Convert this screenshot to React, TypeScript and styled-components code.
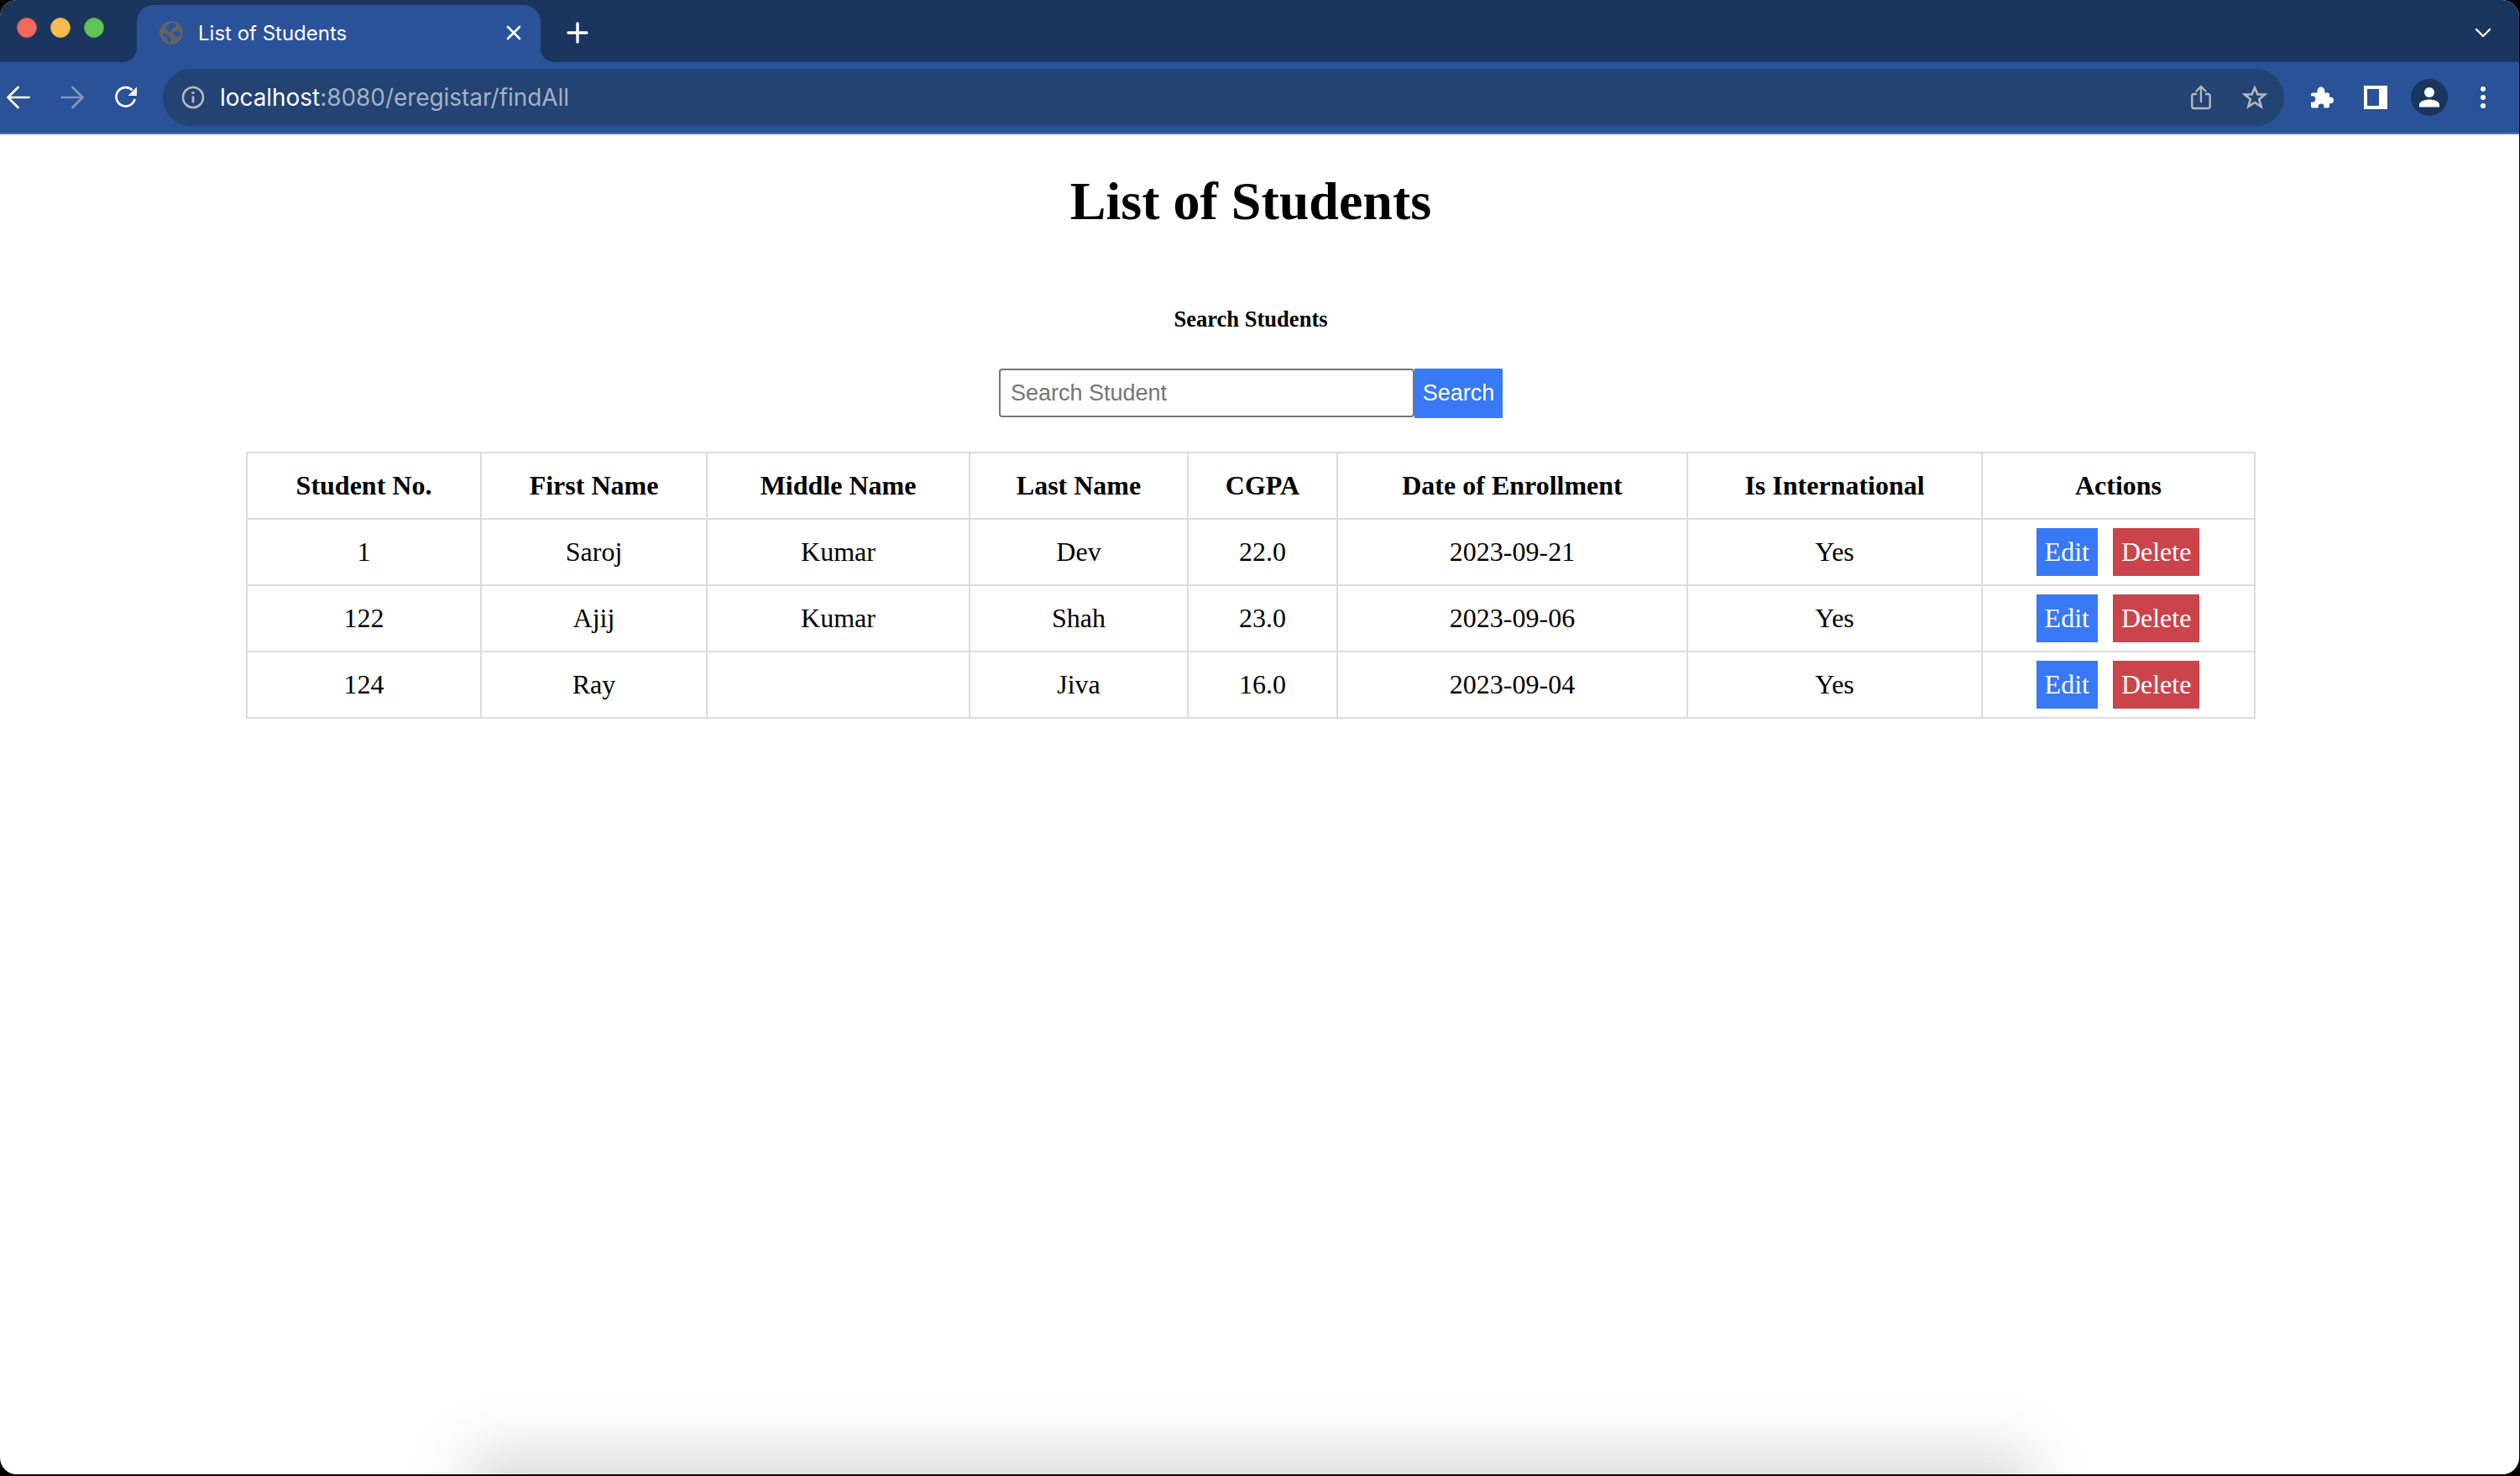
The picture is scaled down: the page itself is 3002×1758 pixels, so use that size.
import React from "react";
import styled, { createGlobalStyle } from "styled-components";

const DARK = "#1a365f";
const CHROME = "#2a5298";
const OMNIBOX = "#234373";
const BLUE = "#3779f6";
const RED = "#cb444c";
const LINE = "#dcdcdc";

const GlobalStyle = createGlobalStyle`
  html, body {
    margin: 0;
    height: 100%;
    background: #000;
    overflow: hidden;
  }
`;

const Window = styled.div`
  position: relative;
  width: calc(100vw - 1px);
  height: calc(100vh - 2px);
  background: #fff;
  border-radius: 20px;
  overflow: hidden;
  display: flex;
  flex-direction: column;
`;

const TabStrip = styled.div`
  height: 74px;
  flex: none;
  background: ${DARK};
  display: flex;
  align-items: flex-end;
  padding-right: 21px;
`;

const Lights = styled.div`
  width: 163px;
  height: 74px;
  flex: none;
  padding: 21px 0 0 20px;
  box-sizing: border-box;
  display: flex;
  gap: 16px;
  align-items: flex-start;
`;

const Light = styled.span<{ $color: string; $edge: string }>`
  width: 24px;
  height: 24px;
  box-sizing: border-box;
  border-radius: 50%;
  background: ${(p) => p.$color};
  border: 1px solid ${(p) => p.$edge};
`;

const Tab = styled.div`
  position: relative;
  width: 481px;
  height: 68px;
  flex: none;
  box-sizing: border-box;
  padding: 0 23px 2px 27px;
  background: ${CHROME};
  border-radius: 20px 20px 0 0;
  display: flex;
  align-items: center;

  &::before,
  &::after {
    content: "";
    position: absolute;
    bottom: 0;
    width: 16px;
    height: 16px;
  }
  &::before {
    left: -16px;
    background: radial-gradient(circle at 0 0, ${DARK} 15.5px, ${CHROME} 16px);
  }
  &::after {
    right: -16px;
    background: radial-gradient(circle at 100% 0, ${DARK} 15.5px, ${CHROME} 16px);
  }
`;

const TabTitle = styled.span`
  flex: 1;
  margin-left: 18px;
  font: 400 24px "Inter", "Liberation Sans", sans-serif;
  color: #fff;
`;

const NewTab = styled.div`
  margin-left: 24px;
  width: 40px;
  height: 68px;
  padding-bottom: 2px;
  box-sizing: border-box;
  display: flex;
  align-items: center;
  justify-content: center;
`;

const StripEnd = styled.div`
  margin-left: auto;
  height: 68px;
  padding-bottom: 2px;
  box-sizing: border-box;
  display: flex;
  align-items: center;
`;

const Toolbar = styled.div`
  height: 84px;
  flex: none;
  background: ${CHROME};
  display: flex;
  align-items: center;
  gap: 20px;
  padding-right: 21px;
  border-bottom: 2px solid #4e72a8;
`;

const IconButton = styled.div`
  width: 44px;
  height: 44px;
  flex: none;
  display: flex;
  align-items: center;
  justify-content: center;
`;

const Omnibox = styled.div`
  flex: 1;
  height: 68px;
  margin: 0 3px 0 2px;
  background: ${OMNIBOX};
  border-radius: 34px;
  display: flex;
  align-items: center;
  padding: 0 13px 0 22px;
`;

const Url = styled.span`
  flex: 1;
  margin-left: 18px;
  font: 400 27.9px "Inter", "Liberation Sans", sans-serif;
  color: #a4b1c6;
`;

const Host = styled.span`
  color: #fff;
`;

const OmniAction = styled.div`
  width: 44px;
  height: 44px;
  margin-left: 20px;
  display: flex;
  align-items: center;
  justify-content: center;
`;

const Page = styled.main`
  flex: 1;
  padding: 0 21px 0 0;
  display: flex;
  flex-direction: column;
  align-items: center;
  font-family: "Liberation Serif", "Times New Roman", serif;
  color: #000;
`;

const Title = styled.h1`
  margin: 42px 0 0;
  font-size: 64px;
  line-height: 76px;
  font-weight: 700;
`;

const SearchHeading = styled.h5`
  margin: 86px 0 0;
  font-size: 26.56px;
  line-height: 33px;
  font-weight: 700;
`;

const SearchForm = styled.form`
  margin: 42px 0 0;
  display: flex;
  align-items: flex-start;
`;

const SearchInput = styled.input`
  width: 495px;
  height: 58px;
  box-sizing: border-box;
  padding: 0 12px;
  border: 2px solid #767676;
  border-radius: 4px;
  outline: none;
  font: 400 27px "Liberation Sans", Arial, sans-serif;

  &::placeholder {
    color: #757575;
    opacity: 1;
  }
`;

const SearchButton = styled.button`
  width: 105px;
  height: 59px;
  padding: 0;
  border: 0;
  background: ${BLUE};
  color: #fff;
  font: 400 27px "Liberation Sans", Arial, sans-serif;
`;

const Table = styled.table`
  margin-top: 40px;
  width: 2392px;
  table-layout: fixed;
  border-collapse: collapse;
  font-size: 32px;
`;

const Col = styled.col<{ $w: number }>`
  width: ${(p) => p.$w}px;
`;

const HeadCell = styled.th`
  height: 77px;
  padding: 0;
  border: 2px solid ${LINE};
  font-weight: 700;
  text-align: center;
`;

const Cell = styled.td`
  height: 77px;
  padding: 0;
  border: 2px solid ${LINE};
  text-align: center;
`;

const Actions = styled.div`
  display: flex;
  justify-content: center;
  gap: 18px;
  padding-right: 1px;
`;

const RowButton = styled.button<{ $bg: string }>`
  height: 57px;
  padding: 0 10px;
  border: 0;
  background: ${(p) => p.$bg};
  color: #fff;
  font-family: "Liberation Serif", "Times New Roman", serif;
  font-size: 32px;
`;

const DockShadow = styled.div`
  position: absolute;
  left: 560px;
  width: 1860px;
  top: 1730px;
  height: 200px;
  background: rgba(0, 0, 0, 0.15);
  filter: blur(34px);
  pointer-events: none;
`;

const Globe = () => (
  <svg width="28" height="28" viewBox="0 0 28 28">
    <circle cx="14" cy="14" r="14" fill="#5f6368" />
    <path
      d="M12 3c3-1 6-1 8 1l-1 3-4 2-1 3-3 1-1-3-3-2zM17 13l6-1 2 3-2 4-4-1-1-2-3-1zM4 15l5 1 3 3 2 1-1 5-3-1-1-4-4-2z"
      fill="#2a5298"
    />
  </svg>
);

const CloseIcon = () => (
  <svg width="18" height="18" viewBox="0 0 18 18" fill="none" stroke="#fff" strokeWidth="2.6" strokeLinecap="round">
    <path d="M2 2l14 14M16 2L2 16" />
  </svg>
);

const PlusIcon = () => (
  <svg width="26" height="26" viewBox="0 0 26 26" fill="none" stroke="#fff" strokeWidth="3.4" strokeLinecap="round">
    <path d="M13 2v22M2 13h22" />
  </svg>
);

const ChevronIcon = () => (
  <svg width="20" height="12" viewBox="0 0 20 12" fill="none" stroke="#fff" strokeWidth="2.4" strokeLinecap="round" strokeLinejoin="round">
    <path d="M2 2l8 8 8-8" />
  </svg>
);

const ArrowIcon = ({ color, flip }: { color: string; flip?: boolean }) => (
  <svg width="28" height="28" viewBox="0 0 28 28" fill="none" stroke={color} strokeWidth="2.6" strokeLinecap="round" strokeLinejoin="round">
    <path d={flip ? "M1.5 14h25M14.5 2l12 12-12 12" : "M26.5 14h-25M13.5 2l-12 12 12 12"} />
  </svg>
);

const ReloadIcon = () => (
  <svg width="28" height="28" viewBox="0 0 28 28">
    <path d="M24.6 16a11.2 11.2 0 1 1-3-10.6" fill="none" stroke="#fff" strokeWidth="2.7" />
    <path d="M27 1.5V12H16.5z" fill="#fff" />
  </svg>
);

const InfoIcon = () => (
  <svg width="28" height="28" viewBox="0 0 28 28" fill="none">
    <circle cx="14" cy="14" r="12" stroke="#b4b9c0" strokeWidth="2.6" />
    <circle cx="14" cy="8.6" r="1.7" fill="#b4b9c0" />
    <path d="M14 12.5v8" stroke="#b4b9c0" strokeWidth="2.8" />
  </svg>
);

const ShareIcon = () => (
  <svg width="24" height="30" viewBox="0 0 24 30" fill="none" stroke="#b4b9c0" strokeWidth="2.4" strokeLinejoin="round">
    <path d="M7 11H3.500A2.200 2.200 0 0 0 1.300 13.200v12.600A2.200 2.200 0 0 0 3.500 28h17a2.200 2.200 0 0 0 2.200-2.200V13.200A2.200 2.200 0 0 0 20.500 11H17" />
    <path d="M12 20V2M6.500 7.500L12 2l5.500 5.500" strokeLinecap="round" />
  </svg>
);

const StarIcon = () => (
  <svg width="30" height="30" viewBox="0 0 30 30" fill="none" stroke="#b4b9c0" strokeWidth="2.6" strokeLinejoin="miter">
    <path d="M15 3.500l3.500 8h8.500l-6.800 5.700 2.400 8.800L15 21l-7.600 5 2.400-8.800L3 11.500h8.500z" />
  </svg>
);

const PuzzleIcon = () => (
  <svg width="30" height="30" viewBox="0 0 30 30" fill="#fff">
    <path d="M2 11.500a2 2 0 0 1 2-2h5.500V7a4.400 4.400 0 0 1 8.800 0v2.500h3.700a2 2 0 0 1 2 2v3.200h1.200a3.800 3.800 0 0 1 0 7.600H24v3.200a2 2 0 0 1-2 2h-4.500v-1.700a3.400 3.400 0 0 0-6.800 0v1.700H4a2 2 0 0 1-2-2v-4.700h1.500a3.800 3.800 0 0 0 0-7.600H2z" />
  </svg>
);

const SidePanelIcon = () => (
  <svg width="28" height="28" viewBox="0 0 28 28">
    <path d="M0 0h28v28H0zM4 4v20h14V4z" fill="#fff" fillRule="evenodd" />
  </svg>
);

const AvatarIcon = () => (
  <svg width="44" height="44" viewBox="0 0 44 44">
    <circle cx="22" cy="22" r="22" fill={DARK} />
    <circle cx="22" cy="16" r="6" fill="#fff" />
    <path d="M10 33.500v-3c0-4 8-6 12-6s12 2 12 6v3z" fill="#fff" />
  </svg>
);

const KebabIcon = () => (
  <svg width="8" height="28" viewBox="0 0 8 28" fill="#fff">
    <circle cx="4" cy="4" r="3" />
    <circle cx="4" cy="14" r="3" />
    <circle cx="4" cy="24" r="3" />
  </svg>
);

const columns = [
  { name: "Student No.", width: 279 },
  { name: "First Name", width: 269 },
  { name: "Middle Name", width: 313 },
  { name: "Last Name", width: 260 },
  { name: "CGPA", width: 178 },
  { name: "Date of Enrollment", width: 417 },
  { name: "Is International", width: 351 },
  { name: "Actions", width: 325 },
];

const students = [
  ["1", "Saroj", "Kumar", "Dev", "22.0", "2023-09-21", "Yes"],
  ["122", "Ajij", "Kumar", "Shah", "23.0", "2023-09-06", "Yes"],
  ["124", "Ray", "", "Jiva", "16.0", "2023-09-04", "Yes"],
];

const App = () => {
  return (
    <>
      <GlobalStyle />
      <Window>
        <TabStrip>
          <Lights>
            <Light $color="#ee6a5f" $edge="#d2574d" />
            <Light $color="#f5bd4f" $edge="#d9a441" />
            <Light $color="#61c454" $edge="#52a846" />
          </Lights>
          <Tab>
            <Globe />
            <TabTitle>List of Students</TabTitle>
            <CloseIcon />
          </Tab>
          <NewTab>
            <PlusIcon />
          </NewTab>
          <StripEnd>
            <IconButton>
              <ChevronIcon />
            </IconButton>
          </StripEnd>
        </TabStrip>
        <Toolbar>
          <IconButton>
            <ArrowIcon color="#fff" />
          </IconButton>
          <IconButton>
            <ArrowIcon color="#7f97c1" flip />
          </IconButton>
          <IconButton>
            <ReloadIcon />
          </IconButton>
          <Omnibox>
            <InfoIcon />
            <Url>
              <Host>localhost</Host>:8080/eregistar/findAll
            </Url>
            <OmniAction>
              <ShareIcon />
            </OmniAction>
            <OmniAction>
              <StarIcon />
            </OmniAction>
          </Omnibox>
          <IconButton>
            <PuzzleIcon />
          </IconButton>
          <IconButton>
            <SidePanelIcon />
          </IconButton>
          <IconButton>
            <AvatarIcon />
          </IconButton>
          <IconButton>
            <KebabIcon />
          </IconButton>
        </Toolbar>
        <Page>
          <Title>List of Students</Title>
          <SearchHeading>Search Students</SearchHeading>
          <SearchForm onSubmit={(e) => e.preventDefault()}>
            <SearchInput placeholder="Search Student" />
            <SearchButton type="submit">Search</SearchButton>
          </SearchForm>
          <Table>
            <colgroup>
              {columns.map((c) => (
                <Col key={c.name} $w={c.width} />
              ))}
            </colgroup>
            <thead>
              <tr>
                {columns.map((c) => (
                  <HeadCell key={c.name}>{c.name}</HeadCell>
                ))}
              </tr>
            </thead>
            <tbody>
              {students.map((row) => (
                <tr key={row[0]}>
                  {row.map((value, i) => (
                    <Cell key={i}>{value}</Cell>
                  ))}
                  <Cell>
                    <Actions>
                      <RowButton $bg={BLUE}>Edit</RowButton>
                      <RowButton $bg={RED}>Delete</RowButton>
                    </Actions>
                  </Cell>
                </tr>
              ))}
            </tbody>
          </Table>
        </Page>
        <DockShadow />
      </Window>
    </>
  );
};

export default App;
